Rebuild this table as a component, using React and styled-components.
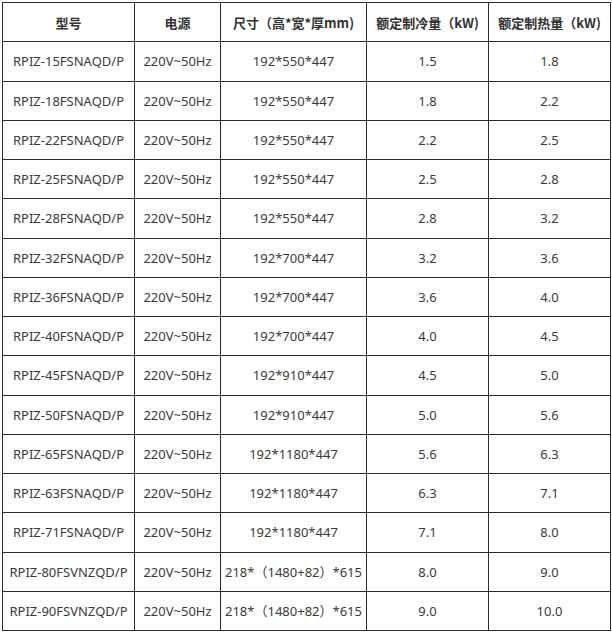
import React from 'react';
import styled, { createGlobalStyle } from 'styled-components';

const GlobalStyle = createGlobalStyle`
  html, body {
    margin: 0;
    padding: 0;
    background: #fff;
  }
  body {
    font-family: "Noto Sans", "Noto Sans CJK SC", sans-serif;
    color: #333;
  }
`;

const Page = styled.div`
  padding: 2px 0 0 2px;
`;

const Table = styled.table`
  border-collapse: collapse;
  table-layout: fixed;
  width: 609px;
`;

const HeadCell = styled.th`
  border: 1px solid #2b2b2b;
  height: 38.25px;
  padding: 0;
  font-size: 13px;
  font-weight: bold;
  text-align: center;
  color: #333;
  font-family: "Noto Sans CJK SC", "Noto Sans", sans-serif;
`;

const Cell = styled.td`
  border: 1px solid #2b2b2b;
  height: 38.25px;
  padding: 0;
  font-size: 13px;
  text-align: center;
  color: #3a3a3a;
  white-space: nowrap;
  font-family: "Noto Sans", "Noto Sans CJK SC", sans-serif;
`;

const columns = [
  { title: '型号', width: 132 },
  { title: '电源', width: 86 },
  { title: '尺寸（高*宽*厚mm)', width: 146 },
  { title: '额定制冷量（kW)', width: 122 },
  { title: '额定制热量（kW)', width: 122 },
];

const rows = [
  ['RPIZ-15FSNAQD/P', '192*550*447', '1.5', '1.8'],
  ['RPIZ-18FSNAQD/P', '192*550*447', '1.8', '2.2'],
  ['RPIZ-22FSNAQD/P', '192*550*447', '2.2', '2.5'],
  ['RPIZ-25FSNAQD/P', '192*550*447', '2.5', '2.8'],
  ['RPIZ-28FSNAQD/P', '192*550*447', '2.8', '3.2'],
  ['RPIZ-32FSNAQD/P', '192*700*447', '3.2', '3.6'],
  ['RPIZ-36FSNAQD/P', '192*700*447', '3.6', '4.0'],
  ['RPIZ-40FSNAQD/P', '192*700*447', '4.0', '4.5'],
  ['RPIZ-45FSNAQD/P', '192*910*447', '4.5', '5.0'],
  ['RPIZ-50FSNAQD/P', '192*910*447', '5.0', '5.6'],
  ['RPIZ-65FSNAQD/P', '192*1180*447', '5.6', '6.3'],
  ['RPIZ-63FSNAQD/P', '192*1180*447', '6.3', '7.1'],
  ['RPIZ-71FSNAQD/P', '192*1180*447', '7.1', '8.0'],
  ['RPIZ-80FSVNZQD/P', '218*（1480+82）*615', '8.0', '9.0'],
  ['RPIZ-90FSVNZQD/P', '218*（1480+82）*615', '9.0', '10.0'],
];

export default function App() {
  return (
    <Page>
      <GlobalStyle />
      <Table>
        <colgroup>
          {columns.map((c) => (
            <col key={c.title} style={{ width: c.width }} />
          ))}
        </colgroup>
        <thead>
          <tr>
            {columns.map((c) => (
              <HeadCell key={c.title}>{c.title}</HeadCell>
            ))}
          </tr>
        </thead>
        <tbody>
          {rows.map((r) => (
            <tr key={r[0]}>
              <Cell>{r[0]}</Cell>
              <Cell>220V~50Hz</Cell>
              <Cell>{r[1]}</Cell>
              <Cell>{r[2]}</Cell>
              <Cell>{r[3]}</Cell>
            </tr>
          ))}
        </tbody>
      </Table>
    </Page>
  );
}
